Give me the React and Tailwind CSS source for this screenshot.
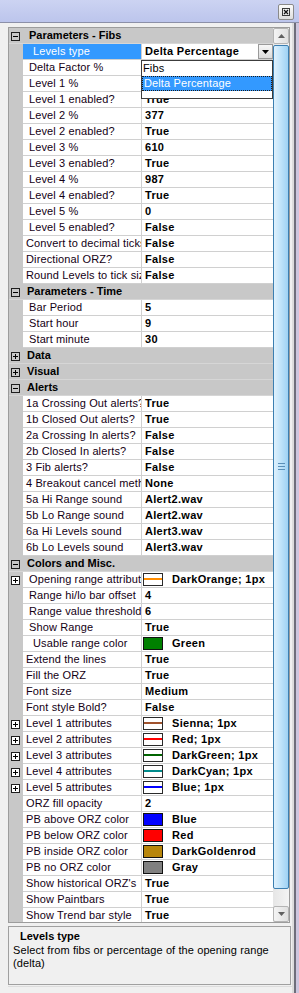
import React from 'react';

// indentation of the property names (leading spaces in the original names)
const pads = { 0: 'pl-[3px]', 1: 'pl-[6px]', 2: 'pl-[10px]' };

const rows = [
  { head: 'Parameters - Fibs', open: true, first: true },
  { name: 'Levels type', value: 'Delta Percentage', ind: 2, selected: true, combo: true },
  { name: 'Delta Factor %', value: '', ind: 1 },
  { name: 'Level 1 %', value: '', ind: 1 },
  { name: 'Level 1 enabled?', value: 'True', ind: 1 },
  { name: 'Level 2 %', value: '377', ind: 1 },
  { name: 'Level 2 enabled?', value: 'True', ind: 1 },
  { name: 'Level 3 %', value: '610', ind: 1 },
  { name: 'Level 3 enabled?', value: 'True', ind: 1 },
  { name: 'Level 4 %', value: '987', ind: 1 },
  { name: 'Level 4 enabled?', value: 'True', ind: 1 },
  { name: 'Level 5 %', value: '0', ind: 1 },
  { name: 'Level 5 enabled?', value: 'False', ind: 1 },
  { name: 'Convert to decimal ticks', value: 'False', ind: 0 },
  { name: 'Directional ORZ?', value: 'False', ind: 0 },
  { name: 'Round Levels to tick size', value: 'False', ind: 0 },
  { head: 'Parameters - Time', open: true },
  { name: 'Bar Period', value: '5', ind: 1 },
  { name: 'Start hour', value: '9', ind: 1 },
  { name: 'Start minute', value: '30', ind: 1 },
  { head: 'Data', open: false },
  { head: 'Visual', open: false },
  { head: 'Alerts', open: true },
  { name: "1a Crossing Out alerts?", value: 'True', ind: 0 },
  { name: '1b Closed Out alerts?', value: 'True', ind: 0 },
  { name: '2a Crossing In alerts?', value: 'False', ind: 0 },
  { name: '2b Closed In alerts?', value: 'False', ind: 0 },
  { name: '3 Fib alerts?', value: 'False', ind: 0 },
  { name: '4 Breakout cancel method', value: 'None', ind: 0 },
  { name: '5a Hi Range sound', value: 'Alert2.wav', ind: 0 },
  { name: '5b Lo Range sound', value: 'Alert2.wav', ind: 0 },
  { name: '6a Hi Levels sound', value: 'Alert3.wav', ind: 0 },
  { name: '6b Lo Levels sound', value: 'Alert3.wav', ind: 0 },
  { head: 'Colors and Misc.', open: true },
  { name: 'Opening range attributes', value: 'DarkOrange; 1px', pen: '#ff8c00', ind: 1, expand: true },
  { name: 'Range hi/lo bar offset', value: '4', ind: 1 },
  { name: 'Range value threshold', value: '6', ind: 1 },
  { name: 'Show Range', value: 'True', ind: 1 },
  { name: 'Usable range color', value: 'Green', solid: '#008000', ind: 2 },
  { name: 'Extend the lines', value: 'True', ind: 0 },
  { name: 'Fill the ORZ', value: 'True', ind: 0 },
  { name: 'Font size', value: 'Medium', ind: 0 },
  { name: 'Font style Bold?', value: 'False', ind: 0 },
  { name: 'Level 1 attributes', value: 'Sienna; 1px', pen: '#a0522d', ind: 0, expand: true },
  { name: 'Level 2 attributes', value: 'Red; 1px', pen: '#ff0000', ind: 0, expand: true },
  { name: 'Level 3 attributes', value: 'DarkGreen; 1px', pen: '#006400', ind: 0, expand: true },
  { name: 'Level 4 attributes', value: 'DarkCyan; 1px', pen: '#008b8b', ind: 0, expand: true },
  { name: 'Level 5 attributes', value: 'Blue; 1px', pen: '#0000ff', ind: 0, expand: true },
  { name: 'ORZ fill opacity', value: '2', ind: 0 },
  { name: 'PB above ORZ color', value: 'Blue', solid: '#0000ff', ind: 0 },
  { name: 'PB below ORZ color', value: 'Red', solid: '#ff0000', ind: 0 },
  { name: 'PB inside ORZ color', value: 'DarkGoldenrod', solid: '#b8860b', ind: 0 },
  { name: 'PB no ORZ color', value: 'Gray', solid: '#808080', ind: 0 },
  { name: "Show historical ORZ's", value: 'True', ind: 0 },
  { name: 'Show Paintbars', value: 'True', ind: 0 },
  { name: 'Show Trend bar style', value: 'True', ind: 0 },
];

const Glyph = ({ open, white }) => (
  <svg width="9" height="9" viewBox="0 0 9 9" className="block">
    <rect x="0.5" y="0.5" width="8" height="8" fill={white ? '#fff' : 'none'} stroke="#1e1e1e" />
    <rect x="2" y="4" width="5" height="1" fill="#000" />
    {!open && <rect x="4" y="2" width="1" height="5" fill="#000" />}
  </svg>
);

const PenSwatch = ({ color }) => (
  <svg width="20" height="13" viewBox="0 0 20 13" className="block shrink-0">
    <rect x="0.5" y="0.5" width="19" height="12" fill="#fff" stroke="#2a2a2a" />
    <rect x="1" y="5" width="18" height="2" fill={color} />
  </svg>
);

const SolidSwatch = ({ color }) => (
  <svg width="20" height="13" viewBox="0 0 20 13" className="block shrink-0">
    <rect x="0.5" y="0.5" width="19" height="12" fill={color} stroke="#111" />
  </svg>
);

const HeaderRow = ({ r }) => (
  <div className="flex h-[16px] shrink-0 bg-[#c8c8c8] border-b border-[#d6d6d6]">
    <div className="w-[14px] shrink-0 pl-[2px] pt-[4px]">
      <Glyph open={r.open} />
    </div>
    <div className={`font-bold leading-[15px] whitespace-nowrap tracking-normal ${r.first ? 'pl-[6px]' : 'pl-[4px]'}`}>{r.head}</div>
  </div>
);

const PropRow = ({ r }) => (
  <div className="flex h-[16px] shrink-0">
    <div className="w-[14px] shrink-0 bg-[#c8c8c8] pl-[2px] pt-[4px]">
      {r.expand && <Glyph open={false} white />}
    </div>
    <div
      className={`w-[119px] shrink-0 overflow-hidden whitespace-nowrap leading-[15px] border-b border-r border-[#d0d0d0] ${pads[r.ind]} ${
        r.selected ? 'bg-[#3399ff] text-white' : 'bg-white text-[#140014]'
      }`}
    >
      {r.name}
    </div>
    <div className="flex-1 min-w-0 flex items-start bg-white border-b border-[#d0d0d0] overflow-hidden whitespace-nowrap">
      {r.pen || r.solid ? (
        <div className="flex items-center h-[15px] pl-[1px]">
          {r.pen ? <PenSwatch color={r.pen} /> : <SolidSwatch color={r.solid} />}
          <span className="ml-[9px] font-bold tracking-[0.3px] leading-[15px]">{r.value}</span>
        </div>
      ) : (
        <span className="pl-[3px] font-bold tracking-[0.3px] leading-[15px] flex-1">{r.value}</span>
      )}
      {r.combo && (
        <div className="w-[15px] h-[15px] shrink-0 border border-[#9a9a9a] bg-gradient-to-b from-[#f7f7f7] to-[#dcdcdc] flex items-center justify-center">
          <svg width="7" height="4" viewBox="0 0 7 4">
            <path d="M0 0h7L3.5 4z" fill="#000" />
          </svg>
        </div>
      )}
    </div>
  </div>
);

const ScrollButton = ({ up }) => (
  <div className="h-[16px] shrink-0 rounded-[2px] border border-[#b4b4b4] bg-gradient-to-r from-[#f4f4f4] to-[#e0e0e0] flex items-center justify-center">
    <svg width="7" height="4" viewBox="0 0 7 4">
      <path d={up ? 'M0 4h7L3.5 0z' : 'M0 0h7L3.5 4z'} fill="#606060" />
    </svg>
  </div>
);

const ScrollBar = () => (
  <div className="w-[16px] shrink-0 flex flex-col bg-gradient-to-r from-[#e6e6e6] to-[#f4f4f4]">
    <ScrollButton up />
    <div className="h-[844px] mt-[1px] shrink-0 rounded-[2px] border border-[#3c7fb1] bg-gradient-to-r from-[#dff1fd] via-[#bfe3fa] to-[#9fd2f4] flex items-center justify-center">
      <svg width="7" height="8" viewBox="0 0 7 8">
        <rect x="0" y="0" width="7" height="1" fill="#5a8fb8" />
        <rect x="0" y="3" width="7" height="1" fill="#5a8fb8" />
        <rect x="0" y="6" width="7" height="1" fill="#5a8fb8" />
      </svg>
    </div>
    <div className="flex-1" />
    <ScrollButton />
  </div>
);

export default function App() {
  return (
    <div className="w-[299px] h-[993px] overflow-hidden bg-[#f0f0f0] flex flex-col font-['Liberation_Sans',Arial,sans-serif] text-[11px] tracking-[0.12px] text-black">
      {/* window title strip */}
      <div className="h-[23px] shrink-0 bg-gradient-to-b from-[#ccd3f2] to-[#bcc5ec] border-b border-[#8c90a8] flex justify-end items-start pt-[4px] pr-[5px]">
        <div className="w-[16px] h-[16px] rounded-[2px] border border-[#8a8a8a] bg-gradient-to-b from-[#fbfbfb] to-[#dedede] flex items-center justify-center">
          <svg width="8" height="8" viewBox="0 0 8 8">
            <rect x="0.5" y="0.5" width="7" height="7" fill="none" stroke="#3a3a3a" />
            <path d="M2 2l4 4M6 2L2 6" stroke="#111" strokeWidth="1.2" />
          </svg>
        </div>
      </div>

      <div className="flex flex-1 min-h-0">
        <div className="w-[292px] shrink-0 flex flex-col pl-[8px] pt-[4px]">
          {/* property grid */}
          <div className="relative w-[282px] h-[896px] shrink-0 border border-[#9c9c9c] flex overflow-hidden">
            <div className="w-[264px] shrink-0 flex flex-col overflow-hidden">
              {rows.map((r, i) => (r.head ? <HeaderRow key={i} r={r} /> : <PropRow key={i} r={r} />))}
            </div>
            <ScrollBar />

            {/* open combo list */}
            <div className="absolute left-[132px] top-[32px] w-[132px] h-[39px] bg-white border border-[#3c3c3c] flex flex-col">
              <div className="h-[15px] pl-[1px] leading-[15px]">Fibs</div>
              <div className="h-[15px] pl-[1px] leading-[13px] bg-[#3399ff] text-white border border-dotted border-[#1b1b1b]">
                Delta Percentage
              </div>
            </div>
          </div>

          {/* help pane */}
          <div className="w-[283px] h-[59px] mt-[3px] shrink-0 border border-[#a0a0a0] bg-[#f0f0f0]">
            <div className="pl-[11px] pt-[2px] font-bold leading-[15px] tracking-normal">Levels type</div>
            <div className="pl-[4px] leading-[13px] tracking-[0.1px]">
              Select from fibs or percentage of the opening range
              <br />
              (delta)
            </div>
          </div>
          <div className="mt-[1px] h-px w-[284px] bg-[#dcdcdc]" />
        </div>

        {/* right window frame */}
        <div className="w-[7px] shrink-0 flex">
          <div className="w-[2px] bg-[#dcdcdc]" />
          <div className="w-[2px] bg-[#6e6e7a]" />
          <div className="w-[3px] bg-[#cdc6de]" />
        </div>
      </div>
    </div>
  );
}
